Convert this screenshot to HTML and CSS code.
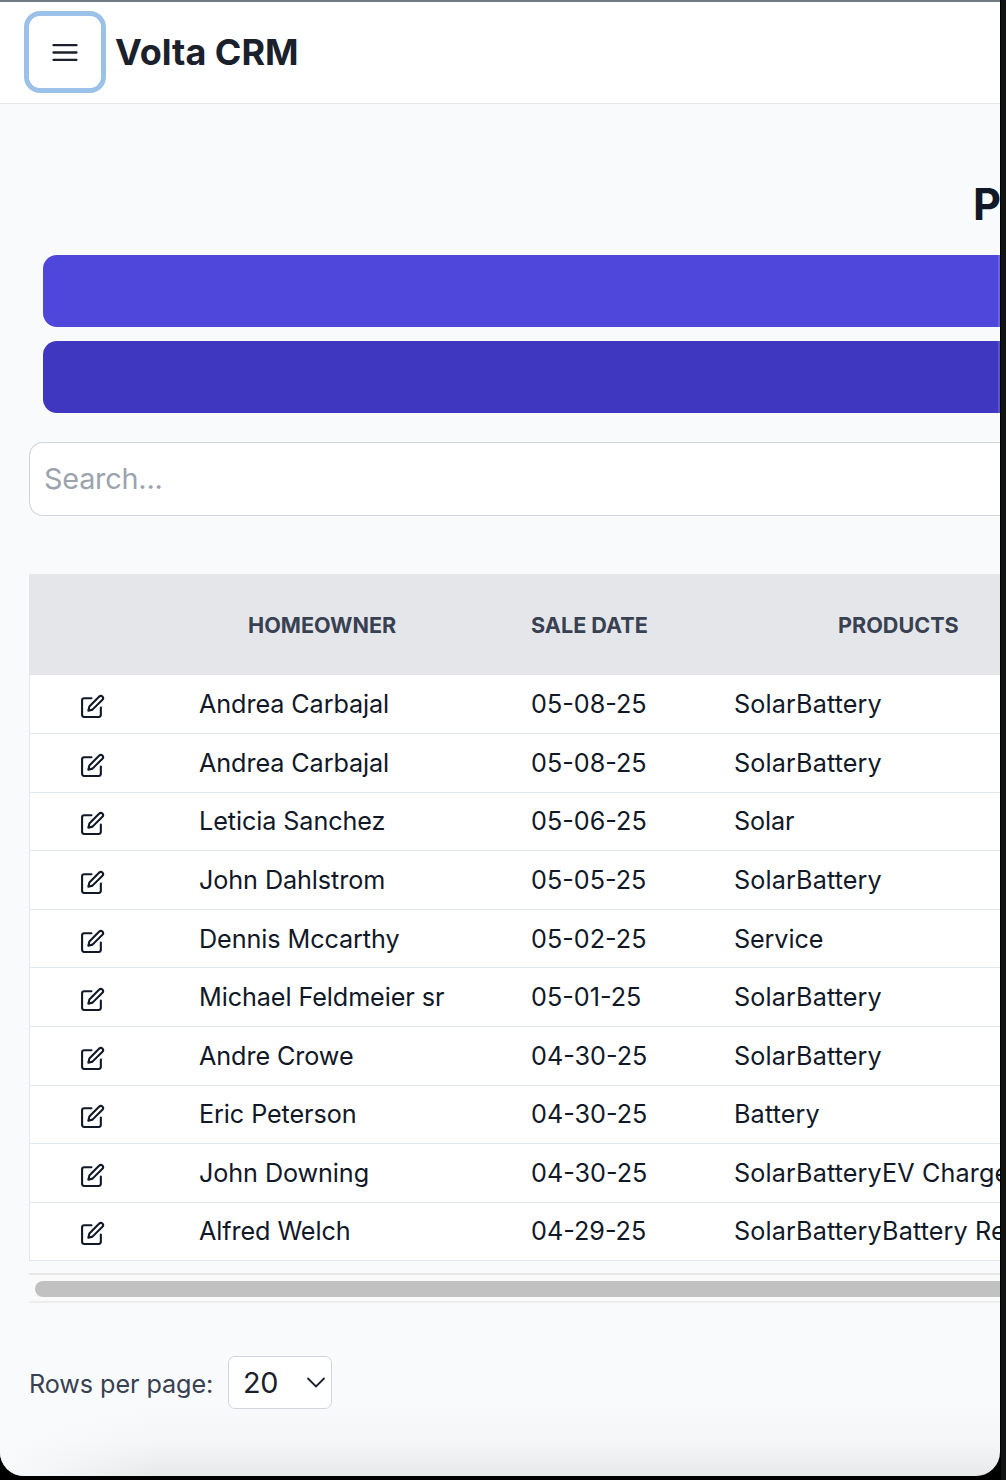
FILE: index.html
```html
<!DOCTYPE html>
<html lang="en">
<head>
<meta charset="utf-8">
<title>Volta CRM</title>
<link rel="stylesheet" href="styles.css">
</head>
<body>
<svg class="sprite" aria-hidden="true">
  <symbol id="edit" viewBox="0 0 24 24">
    <path d="M11 4H4a2 2 0 0 0-2 2v14a2 2 0 0 0 2 2h14a2 2 0 0 0 2-2v-7"/>
    <path d="M18.5 2.5a2.12 2.12 0 0 1 3 3L12 15l-4 1 1-4Z"/>
  </symbol>
</svg>
<div class="window">
  <header class="topbar">
    <button class="menu" aria-label="Menu">
      <svg viewBox="0 0 26 20"><path d="M1.5 2.2h23M1.5 9.5h23M1.5 16.8h23"/></svg>
    </button>
    <span class="brand">Volta CRM</span>
  </header>
  <main class="page">
    <h1 class="title">P</h1>
    <div class="actions">
      <button class="action" aria-label="Primary action"></button>
      <button class="action action-dark" aria-label="Secondary action"></button>
    </div>
    <div class="search">Search...</div>
    <div class="table">
      <div class="row head"><span></span><span class="h-owner">HOMEOWNER</span><span class="h-date">SALE DATE</span><span class="h-products">PRODUCTS</span></div>
      <div class="row"><svg class="edit"><use href="#edit"/></svg><span class="owner">Andrea Carbajal</span><span>05-08-25</span><span class="bundle">SolarBattery</span></div>
      <div class="row"><svg class="edit"><use href="#edit"/></svg><span class="owner">Andrea Carbajal</span><span>05-08-25</span><span class="bundle">SolarBattery</span></div>
      <div class="row"><svg class="edit"><use href="#edit"/></svg><span class="owner">Leticia Sanchez</span><span>05-06-25</span><span class="single">Solar</span></div>
      <div class="row"><svg class="edit"><use href="#edit"/></svg><span class="owner">John Dahlstrom</span><span>05-05-25</span><span class="bundle">SolarBattery</span></div>
      <div class="row"><svg class="edit"><use href="#edit"/></svg><span class="owner">Dennis Mccarthy</span><span>05-02-25</span><span class="single">Service</span></div>
      <div class="row"><svg class="edit"><use href="#edit"/></svg><span class="owner">Michael Feldmeier sr</span><span>05-01-25</span><span class="bundle">SolarBattery</span></div>
      <div class="row"><svg class="edit"><use href="#edit"/></svg><span class="owner">Andre Crowe</span><span>04-30-25</span><span class="bundle">SolarBattery</span></div>
      <div class="row"><svg class="edit"><use href="#edit"/></svg><span class="owner">Eric Peterson</span><span>04-30-25</span><span class="bundle">Battery</span></div>
      <div class="row"><svg class="edit"><use href="#edit"/></svg><span class="owner">John Downing</span><span>04-30-25</span><span class="bundle">SolarBatteryEV Charger</span></div>
      <div class="row"><svg class="edit"><use href="#edit"/></svg><span class="owner">Alfred Welch</span><span>04-29-25</span><span class="bundle">SolarBatteryBattery Re</span></div>
    </div>
    <div class="scrollbar"><div class="thumb"></div></div>
    <div class="pager">
      <span class="pager-label">Rows per page:</span>
      <div class="select"><span>20</span><svg viewBox="0 0 18 12"><path d="M1 1.5l8 8 8-8"/></svg></div>
    </div>
  </main>
</div>
</body>
</html>
```
FILE: styles.css
```css
* { box-sizing: border-box; }
body {
  margin: 0;
  width: 1006px;
  height: 1480px;
  overflow: hidden;
  background: linear-gradient(90deg, #000 0 1001px, #121313 1001px);
  font-family: Inter, sans-serif;
  color: #111827;
}
.sprite { display: none; }
button { padding: 0; border: 0; font: inherit; }
.window {
  width: 1000px;
  height: 1476px;
  overflow: hidden;
  border-top: 2px solid #6f7a82;
  border-radius: 0 0 24px 24px;
  background:
    linear-gradient(90deg, #f9fafc, #f9fafc00 160px),
    linear-gradient(#f9fafc 0 1400px, #f5f6f8 1440px, #e8e9e9 1474px);
}
.topbar {
  display: flex;
  align-items: center;
  height: 102px;
  padding: 0 24px 2px;
  border-bottom: 1px solid #e5e7eb;
  background: #fff;
}
.menu {
  display: grid;
  place-items: center;
  width: 82px;
  height: 82px;
  border: 5px solid #9bc1e9;
  border-radius: 16px;
  background: #fff;
}
.menu svg { width: 26px; height: 20px; margin: 3px 1px 0 0; fill: none; stroke: #1a202c; stroke-width: 2.3; stroke-linecap: round; }
.brand { margin-left: 9px; font-size: 36px; font-weight: 700; line-height: 50px; color: #1a202c; white-space: nowrap; }
.page { padding: 0 0 0 29px; }
.title { width: 40px; margin: 71px 0 0 944px; font-size: 43.2px; font-weight: 700; line-height: 58px; }
.actions { display: grid; gap: 14px; margin: 22px 0 0 14px; }
.action { height: 72px; border-radius: 14px 0 0 14px; background: #4f46dc; border-right: 2px solid #6b63e0; }
.action-dark { background: #4037c1; border-right-color: #5c54cb; }
.search {
  height: 74px;
  margin-top: 29px;
  padding-left: 14px;
  border: 1px solid #d1d5db;
  border-right: 0;
  border-radius: 14px 0 0 14px;
  background: #fff;
  font-size: 28.8px;
  letter-spacing: -0.2px;
  line-height: 72px;
  color: #9ca3af;
}
.table { margin-top: 58px; }
.row {
  display: grid;
  grid-template-columns: 169px 332px 203px 1fr;
  align-items: center;
  height: 58.6px;
  border-left: 1px solid #e2e8f0;
  border-bottom: 1px solid #e2e8f0;
  background: #fff;
  font-size: 25.2px;
  line-height: 36px;
  white-space: nowrap;
}
.head { height: 101.35px; border: 0; padding-left: 1px; background: #e5e6ea; font-size: 21.6px; font-weight: 700; color: #374151; }
.h-owner { padding-left: 49px; }
.h-products { padding-left: 104px; }
.owner { letter-spacing: -0.09px; }
.single { letter-spacing: -0.12px; }
.bundle { letter-spacing: 0.13px; }
.edit { width: 25px; height: 25px; margin: 5px 0 0 50px; fill: none; stroke: #111827; stroke-width: 2; stroke-linecap: round; stroke-linejoin: round; }
.scrollbar { height: 30px; margin-top: 11.65px; padding: 6px 0 0 6px; border-top: 2px solid #e8e8e8; border-bottom: 2px solid #ededed; background: #fafafa; }
.thumb { height: 16px; border-radius: 8px 0 0 8px; background: #c1c1c1; }
.pager { display: flex; align-items: center; margin-top: 53px; }
.pager-label { width: 199px; padding-top: 3px; font-size: 25.2px; letter-spacing: -0.08px; color: #374151; white-space: nowrap; }
.select {
  display: flex;
  align-items: center;
  justify-content: space-between;
  width: 104px;
  height: 53px;
  padding: 0 6px 0 14px;
  border: 1px solid #d1d5db;
  border-radius: 7px;
  background: #fff;
  font-size: 28.8px;
  letter-spacing: -0.3px;
  color: #1a202c;
}
.select svg { width: 18px; height: 12px; margin-top: 1px; fill: none; stroke: #1a202c; stroke-width: 1.8; stroke-linecap: round; }
```
